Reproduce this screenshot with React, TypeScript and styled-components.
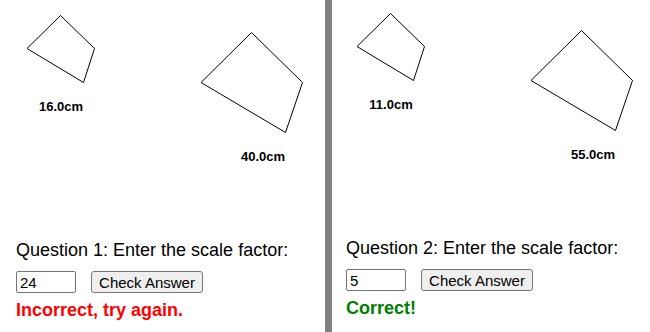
import React from 'react';
import styled, { createGlobalStyle } from 'styled-components';

type Question = {
    id: number;
    small: string;
    large: string;
    answer: string;
    correct: boolean;
    lift: number;
    inset: number;
}

const questions: Question[] = [
    {id: 1, small: '16.0cm', large: '40.0cm', answer: '24', correct: false, lift: 2, inset: 16},
    {id: 2, small: '11.0cm', large: '55.0cm', answer: '5', correct: true, lift: 0, inset: 14},
];

const GlobalStyle = createGlobalStyle`
  html, body {
    margin: 0;
    padding: 0;
    background: #ffffff;
  }

  body {
    font-family: "Liberation Sans", Arial, sans-serif;
    color: #000000;
  }
`;

const Page = styled.div`
  display: flex;
  width: 650px;
  height: 332px;
  overflow: hidden;
`;

// first panel carries the grey divider on its right edge
const Panel = styled.section<{ $lift: number; $inset: number; $divider?: boolean }>`
  display: flex;
  flex-direction: column;
  flex: ${p => p.$divider ? '0 0 332px' : '1 1 auto'};
  box-sizing: border-box;
  padding-top: ${p => p.$lift}px;
  padding-left: ${p => p.$inset}px;
  border-right: ${p => p.$divider ? '7px solid #808080' : 'none'};
`;

const Figure = styled.svg`
  display: block;
  width: 300px;
  height: 220px;
  flex: 0 0 auto;
`;

const Shape = styled.polygon`
  fill: none;
  stroke: #000000;
  stroke-width: 1;
`;

const Label = styled.text`
  font-family: "Liberation Sans", Arial, sans-serif;
  font-size: 13px;
  font-weight: bold;
  fill: #000000;
`;

const Prompt = styled.div`
  margin-top: 18px;
  font-size: 18px;
`;

const Controls = styled.div`
  display: flex;
  align-items: center;
  gap: 15px;
  margin-top: 10px;
`;

const AnswerInput = styled.input`
  box-sizing: border-box;
  width: 60px;
  height: 22px;
  padding: 0 3px;
  border: 1px solid #767676;
  border-radius: 2px;
  font-family: "Liberation Sans", Arial, sans-serif;
  font-size: 15px;
  color: #000000;
  background: #ffffff;
`;

const CheckButton = styled.button`
  box-sizing: border-box;
  width: 112px;
  height: 22px;
  padding: 0;
  border: 1px solid #767676;
  border-radius: 3px;
  background: #efefef;
  font-family: "Liberation Sans", Arial, sans-serif;
  font-size: 15px;
  color: #000000;
`;

const Feedback = styled.div<{ $correct: boolean }>`
  margin-top: 7px;
  font-size: 18px;
  font-weight: bold;
  color: ${p => p.$correct ? '#008000' : '#ff0000'};
`;

const QuestionPanel = ({q, divider}: { q: Question; divider?: boolean }) => {
    const [value, setValue] = React.useState(q.answer);

    return (
        <Panel $lift={q.lift} $inset={q.inset} $divider={divider}>
            <Figure viewBox="0 0 300 220">
                <Shape points="44.5,13.5 78.5,46.5 67.5,80.5 11,46.5"/>
                <Label x={45} y={109} textAnchor="middle">{q.small}</Label>
                <Shape points="235.5,30.5 286.5,80.5 269.5,130.5 185,80.5"/>
                <Label x={247} y={159} textAnchor="middle">{q.large}</Label>
            </Figure>
            <Prompt>Question {q.id}: Enter the scale factor:</Prompt>
            <Controls>
                <AnswerInput value={value} onChange={e => setValue(e.target.value)}/>
                <CheckButton>Check Answer</CheckButton>
            </Controls>
            <Feedback $correct={q.correct}>{q.correct ? 'Correct!' : 'Incorrect, try again.'}</Feedback>
        </Panel>
    );
};

const App = () => {
    return (
        <>
            <GlobalStyle/>
            <Page>
                {questions.map((q, key) => (
                    <QuestionPanel key={q.id} q={q} divider={key === 0}/>
                ))}
            </Page>
        </>
    );
};

export default App;
